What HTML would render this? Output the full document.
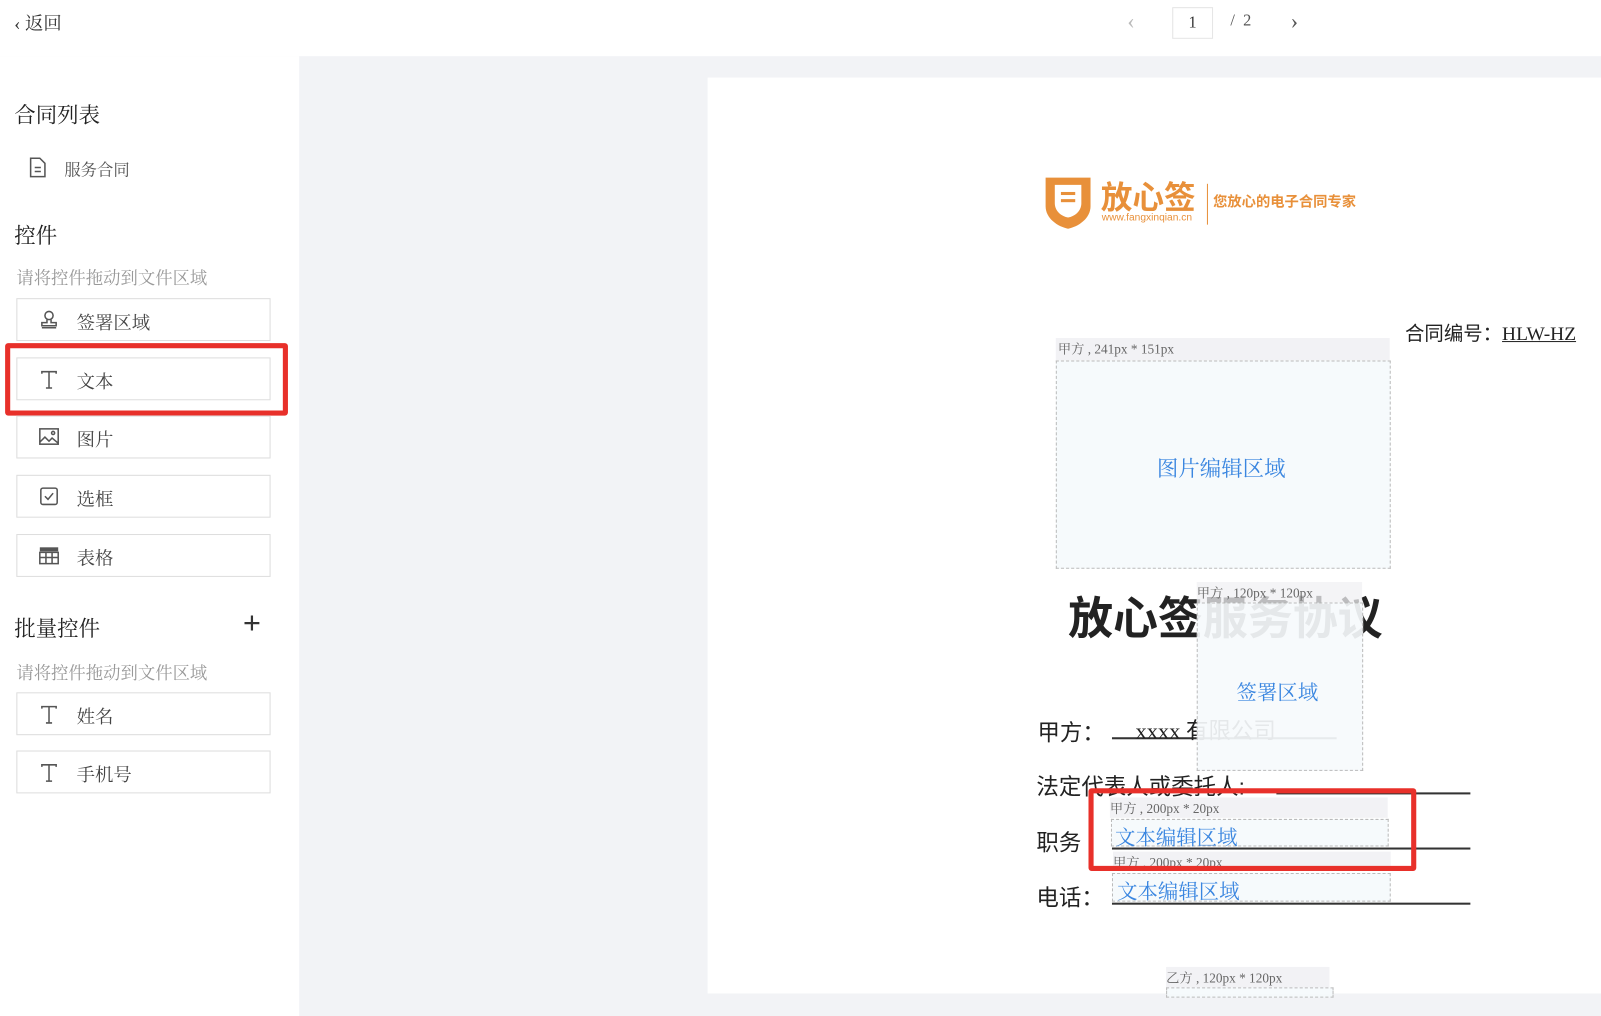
<!DOCTYPE html>
<html><head><meta charset="utf-8"><style>
*{margin:0;padding:0;box-sizing:border-box}
body{width:1601px;height:993px;position:relative;overflow:hidden;background:#f2f3f6;font-family:"Liberation Serif","Noto Serif CJK SC","Noto Sans CJK SC",serif;color:#333}
#w{position:absolute;left:0;top:0;width:1568px;height:973px;transform:scale(1.0211);transform-origin:0 0}
.a{position:absolute}
.hdr{left:0;top:0;width:1601px;height:55px;background:#fff}
.side{left:0;top:55px;width:293px;height:940px;background:#fff}
.page{left:693px;top:76px;width:900px;height:897px;background:#fff}
.h{font-size:21px;color:#222}
.tip{font-size:17px;color:#999}
.btn{left:16px;width:249px;height:42px;border:1px solid #ddd;background:#fff;font-size:18px;color:#444}
.btn span{position:absolute;left:58px;top:9px}
.btn svg{position:absolute;left:21px;top:11px}
.red{border:5px solid #e8302a;border-radius:3px}
.lbl{font-size:13px;color:#666;background:rgba(240,240,243,.85)}
.dash{border:1.5px dashed #bbb;background:rgba(245,250,252,.9)}
.blue{color:#3a86e0}
.doc{font-size:22px;color:#222;font-family:"Liberation Sans","Noto Sans CJK SC",sans-serif}
.ul{border-bottom:2px solid #333}
</style></head><body><div id="w">
<div class="a hdr"></div>
<div class="a" style="left:14px;top:9px;font-size:18px;color:#333">‹ 返回</div>
<div class="a" style="left:1104px;top:8px;font-size:22px;color:#bbb">‹</div>
<div class="a" style="left:1148px;top:7px;width:40px;height:31px;border:1px solid #e5e5e5;text-align:center;font-size:16px;line-height:30px">1</div>
<div class="a" style="left:1205px;top:12px;font-size:16px;color:#555">/&nbsp; 2</div>
<div class="a" style="left:1264px;top:8px;font-size:22px;color:#555">›</div>
<div class="a side"></div>
<div class="a h" style="left:14px;top:97px">合同列表</div>
<svg class="a" style="left:28px;top:154px" width="18" height="20" viewBox="0 0 18 20"><path d="M2 1h9l5 5v13H2z" fill="none" stroke="#555" stroke-width="1.5"/><path d="M6 10h6M6 14h6" stroke="#555" stroke-width="1.5"/></svg>
<div class="a" style="left:63px;top:154px;font-size:16px;color:#555">服务合同</div>
<div class="a h" style="left:14px;top:215px">控件</div>
<div class="a tip" style="left:16px;top:258px">请将控件拖动到文件区域</div>
<div class="a btn" style="top:292px"><svg width="20" height="18" viewBox="0 0 20 18" fill="none" stroke="#555" stroke-width="1.5"><circle cx="10" cy="5" r="4"/><path d="M8 9v3H3v3h14v-3h-5V9M3 17h14"/></svg><span>签署区域</span></div>
<div class="a btn" style="top:350px"><svg width="20" height="20" viewBox="0 0 20 20" fill="none" stroke="#555" stroke-width="1.5"><path d="M3 4V2h14v2M10 2v16M7 18h6"/></svg><span>文本</span></div>
<div class="a red" style="left:5px;top:336px;width:277px;height:71px"></div>
<div class="a btn" style="top:407px"><svg width="20" height="18" viewBox="0 0 20 18" fill="none" stroke="#555" stroke-width="1.5"><rect x="1" y="1" width="18" height="15"/><path d="M1 14l5-5 4 4 3-3 6 5"/><circle cx="14" cy="5" r="1.5"/></svg><span>图片</span></div>
<div class="a btn" style="top:465px"><svg width="20" height="18" viewBox="0 0 20 18" fill="none" stroke="#555" stroke-width="1.5"><rect x="2" y="1" width="16" height="16" rx="2"/><path d="M6 9l3 3 5-6"/></svg><span>选框</span></div>
<div class="a btn" style="top:523px"><svg width="20" height="18" viewBox="0 0 20 18" fill="#555"><rect x="1" y="1" width="18" height="4"/><path d="M1 6h18v11H1z" fill="none" stroke="#555" stroke-width="1.5"/><path d="M1 11h18M7 6v11M13 6v11" stroke="#555" stroke-width="1.5"/></svg><span>表格</span></div>
<div class="a h" style="left:14px;top:600px">批量控件</div>
<div class="a" style="left:238px;top:594px;font-size:30px;color:#333;font-family:'Liberation Sans',sans-serif">+</div>
<div class="a tip" style="left:16px;top:645px">请将控件拖动到文件区域</div>
<div class="a btn" style="top:678px"><svg width="20" height="20" viewBox="0 0 20 20" fill="none" stroke="#555" stroke-width="1.5"><path d="M3 4V2h14v2M10 2v16M7 18h6"/></svg><span>姓名</span></div>
<div class="a btn" style="top:735px"><svg width="20" height="20" viewBox="0 0 20 20" fill="none" stroke="#555" stroke-width="1.5"><path d="M3 4V2h14v2M10 2v16M7 18h6"/></svg><span>手机号</span></div>

<div class="a page"></div>
<svg class="a" style="left:1020px;top:170px" width="52" height="56" viewBox="0 0 52 56"><path d="M4 4h44v28c0 12-12 20-22 22C16 52 4 44 4 32z" fill="#e8903a"/><path d="M13 11h26v18c0 8-7 13-13 14-6-1-13-6-13-14z" fill="#fff"/><rect x="19" y="18" width="14" height="3" fill="#e8903a"/><rect x="19" y="25" width="14" height="3" fill="#e8903a"/></svg>
<div class="a" style="left:1078px;top:168px;font-size:31px;font-weight:bold;color:#e8903a;font-family:'Liberation Sans','Noto Sans CJK SC',sans-serif">放心签</div>
<div class="a" style="left:1079px;top:208px;font-size:10px;color:#e8903a;font-family:'Liberation Sans',sans-serif">www.fangxinqian.cn</div>
<div class="a" style="left:1182px;top:180px;width:1px;height:40px;background:#e8903a"></div>
<div class="a" style="left:1188px;top:187px;font-size:14px;font-weight:bold;color:#e8903a;font-family:'Noto Sans CJK SC',sans-serif">您放心的电子合同专家</div>
<div class="a doc" style="left:1376px;top:312px;font-size:19px">合同编号：<span style="text-decoration:underline;font-family:'Liberation Serif',serif">HLW-HZ</span></div>
<div class="a lbl" style="left:1034px;top:331px;width:327px;height:22px;padding-left:2px">甲方 , 241px * 151px</div>
<div class="a dash" style="left:1034px;top:353px;width:328px;height:204px"></div>
<div class="a blue" style="left:1133px;top:443px;font-size:21px">图片编辑区域</div>
<div class="a doc" style="left:1046px;top:570px;font-size:44px;font-weight:bold">放心签服务协议</div>
<div class="a doc" style="left:1016px;top:700px">甲方：</div>
<div class="a ul" style="left:1089px;top:722px;width:220px"></div>
<div class="a doc" style="left:1112px;top:698px;font-family:'Liberation Serif','Noto Sans CJK SC',serif">xxxx 有限公司</div>
<div class="a doc" style="left:1015px;top:753px">法定代表人或委托人:</div>
<div class="a ul" style="left:1250px;top:776px;width:190px"></div>
<div class="a doc" style="left:1015px;top:808px">职务</div>
<div class="a ul" style="left:1089px;top:830px;width:351px"></div>
<div class="a doc" style="left:1015px;top:862px">电话：</div>
<div class="a ul" style="left:1089px;top:884px;width:351px"></div>
<div class="a lbl" style="left:1172px;top:570px;width:162px;height:20px;background:rgba(240,240,243,.75)">甲方 , 120px * 120px</div>
<div class="a dash" style="left:1172px;top:590px;width:163px;height:165px;background:rgba(246,250,252,.92)"></div>
<div class="a blue" style="left:1211px;top:662px;font-size:20px">签署区域</div>
<div class="a lbl" style="left:1087px;top:781px;width:272px;height:20px">甲方 , 200px * 20px</div>
<div class="a dash" style="left:1088px;top:802px;width:272px;height:27px"></div>
<div class="a blue" style="left:1092px;top:804px;font-size:20px">文本编辑区域</div>
<div class="a lbl" style="left:1090px;top:834px;width:272px;height:17px;overflow:hidden">甲方 , 200px * 20px</div>
<div class="a dash" style="left:1089px;top:855px;width:273px;height:28px"></div>
<div class="a blue" style="left:1094px;top:857px;font-size:20px">文本编辑区域</div>
<div class="a red" style="left:1066px;top:772px;width:321px;height:81px"></div>
<div class="a lbl" style="left:1142px;top:947px;width:160px;height:20px">乙方 , 120px * 120px</div>
<div class="a dash" style="left:1142px;top:967px;width:164px;height:10px"></div>
</div></body></html>
